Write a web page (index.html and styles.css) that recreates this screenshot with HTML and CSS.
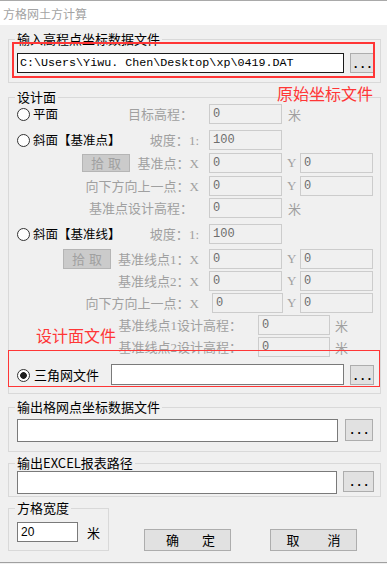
FILE: index.html
```html
<!DOCTYPE html>
<html lang="zh-CN">
<head>
  <meta charset="UTF-8" />
  <title>方格网土方计算</title>
  <link rel="stylesheet" href="styles.css">
</head>
<body>
  <div class="window">
    <div class="titlebar">方格网土方计算</div>

    <div class="client">
      <fieldset class="group g-in">
        <legend>输入高程点坐标数据文件</legend>
        <div class="file-row">
          <input class="path" value="C:\Users\Yiwu. Chen\Desktop\xp\0419.DAT">
          <button class="dots">...</button>
        </div>
      </fieldset>

      <fieldset class="group g-design">
        <legend>设计面</legend>

        <div class="row first">
          <div class="left">
            <span class="radio"></span><span class="opt">平面</span>
            <span class="lbl colon">目标高程：</span>
          </div>
          <input class="num" value="0" disabled>
          <span class="unit">米</span>
        </div>

        <div class="row gap6">
          <div class="left">
            <span class="radio"></span><span class="opt">斜面【基准点】</span>
            <span class="lbl">坡度：<span class="ax">1:</span></span>
          </div>
          <input class="num" value="100" disabled>
        </div>

        <div class="row gap3">
          <div class="left">
            <button class="pick" disabled><span>拾</span><span>取</span></button>
            <span class="lbl">基准点：<span class="ax">X</span></span>
          </div>
          <input class="num" value="0" disabled>
          <span class="axis">Y</span>
          <input class="num second" value="0" disabled>
        </div>

        <div class="row gap3">
          <div class="left">
            <span class="lbl">向下方向上一点：<span class="ax">X</span></span>
          </div>
          <input class="num" value="0" disabled>
          <span class="axis">Y</span>
          <input class="num second" value="0" disabled>
        </div>

        <div class="row">
          <div class="left">
            <span class="lbl colon">基准点设计高程：</span>
          </div>
          <input class="num" value="0" disabled>
          <span class="unit">米</span>
        </div>

        <div class="row gap6">
          <div class="left">
            <span class="radio"></span><span class="opt">斜面【基准线】</span>
            <span class="lbl">坡度：<span class="ax">1:</span></span>
          </div>
          <input class="num" value="100" disabled>
        </div>

        <div class="row gap5">
          <div class="left">
            <button class="pick tall" disabled><span>拾</span><span>取</span></button>
            <span class="lbl">基准线点<span class="ax">1</span>：<span class="ax">X</span></span>
          </div>
          <input class="num" value="0" disabled>
          <span class="axis">Y</span>
          <input class="num second" value="0" disabled>
        </div>

        <div class="row">
          <div class="left">
            <span class="lbl">基准线点<span class="ax">2</span>：<span class="ax">X</span></span>
          </div>
          <input class="num" value="0" disabled>
          <span class="axis">Y</span>
          <input class="num second" value="0" disabled>
        </div>

        <div class="row">
          <div class="left">
            <span class="lbl">向下方向上一点：<span class="ax">X</span></span>
          </div>
          <input class="num shift" value="0" disabled>
          <span class="axis narrow">Y</span>
          <input class="num second" value="0" disabled>
        </div>

        <div class="row">
          <div class="left wide">
            <span class="lbl colon">基准线点<span class="ax">1</span>设计高程：</span>
          </div>
          <input class="num w72" value="0" disabled>
          <span class="unit near">米</span>
        </div>

        <div class="row">
          <div class="left wide">
            <span class="lbl colon">基准线点<span class="ax">2</span>设计高程：</span>
          </div>
          <input class="num w72" value="0" disabled>
          <span class="unit near">米</span>
        </div>

        <div class="row tri gap7">
          <div class="left tri-left">
            <span class="radio on"></span><span class="opt big">三角网文件</span>
          </div>
          <input class="file tri-file" value="">
          <button class="dots">...</button>
        </div>
      </fieldset>

      <fieldset class="group g-out">
        <legend>输出格网点坐标数据文件</legend>
        <div class="file-row">
          <input class="file out-file" value="">
          <button class="dots out-btn">...</button>
        </div>
      </fieldset>

      <fieldset class="group g-excel">
        <legend>输出EXCEL报表路径</legend>
        <div class="file-row">
          <input class="file excel-file" value="">
          <button class="dots excel-btn">...</button>
        </div>
      </fieldset>

      <div class="bottom">
        <fieldset class="group g-size">
          <legend>方格宽度</legend>
          <div class="size-row">
            <input class="file size-in" value="20">
            <span class="size-unit">米</span>
          </div>
        </fieldset>
        <button class="cmd ok"><span>确</span><span>定</span></button>
        <button class="cmd cancel"><span>取</span><span>消</span></button>
      </div>
    </div>

    <div class="foot"></div>

    <div class="mark box1"></div>
    <div class="mark note note1">原始坐标文件</div>
    <div class="mark note note2">设计面文件</div>
    <div class="mark box2"></div>
  </div>
</body>
</html>
```

FILE: styles.css
```css
* {
  box-sizing: border-box;
}

body {
  margin: 0;
  background: #f0f0f0;
  font-family: "Noto Sans CJK SC", sans-serif;
  font-size: 13px;
  color: #000;
}

.window {
  position: relative;
  width: 387px;
  height: 564px;
  overflow: hidden;
}

.titlebar {
  height: 25px;
  border-top: 1px solid #a9a9a9;
  background: #fff;
  padding-left: 3px;
  font-size: 12px;
  line-height: 25px;
  color: #a3a3a3;
}

.client {
  padding: 0 6px 0 8px;
}

/* group boxes */
.group {
  margin: 0;
  padding: 0 6px 0 8px;
  border: 1px solid #d9d9d9;
  min-width: 0;
}

.group legend {
  margin-left: -2px;
  padding: 0 2px;
  font-size: 13px;
  line-height: 14px;
}

.g-in {
  margin-top: 7px;
  padding-top: 7px;
  padding-bottom: 9px;
}

.g-design {
  margin-top: 7px;
  padding-bottom: 8px;
}

.g-out {
  margin-top: 6px;
  padding-top: 5px;
  padding-bottom: 9px;
}

.g-excel {
  margin-top: 4px;
  padding-top: 1px;
  padding-bottom: 2px;
}

.file-row {
  display: flex;
  align-items: flex-start;
}

input {
  margin: 0;
  outline: none;
}

.path {
  width: 327px;
  height: 20px;
  border: 1px solid #1a1a1a;
  background: #fff;
  padding: 0 2px;
  font: 11.7px "Liberation Mono", monospace;
  color: #000;
}

.dots {
  flex: none;
  margin-left: 6px;
  width: 24px;
  height: 20px;
  padding: 0 0 0 3px;
  background: #e1e1e1;
  border: 1px solid #adadad;
  font: bold 12px "Liberation Sans", sans-serif;
  letter-spacing: 3.6px;
  line-height: 20px;
  color: #000;
}

/* design surface rows */
.row {
  display: flex;
  align-items: center;
  height: 20px;
  margin-top: 2px;
}

.row.first { margin-top: 0; }
.row.gap3 { margin-top: 3px; }
.row.gap5 { margin-top: 5px; }
.row.gap6 { margin-top: 6px; }
.row.gap7 { margin-top: 7px; }

.left {
  flex: none;
  width: 182px;
  display: flex;
  align-items: center;
  line-height: 16px;
}

.left.wide { width: 231px; }
.left.tri-left { width: 94px; }

.radio {
  flex: none;
  width: 13px;
  height: 13px;
  border: 1px solid #333;
  border-radius: 50%;
  background: #fff;
}

.radio.on {
  background: radial-gradient(circle, #1e1e1e 0 3px, #fff 3.7px);
}

.opt {
  margin-left: 3px;
  font-size: 12.5px;
  white-space: nowrap;
}

.opt.big {
  margin-left: 4px;
  font-size: 13px;
}

.lbl {
  margin-left: auto;
  color: #a0a0a0;
  white-space: nowrap;
}

.lbl.colon { padding-right: 6px; }

.ax {
  font-family: "Liberation Serif", serif;
  font-size: 13px;
}

.num {
  flex: none;
  margin-left: 10px;
  width: 73px;
  height: 20px;
  border: 1px solid #cccccc;
  background: #f0f0f0;
  padding: 0 3px;
  font: 12px "Liberation Mono", monospace;
  color: #6d6d6d;
}

.num.second { margin-left: 0; }
.num.shift { margin-left: 13px; width: 71px; }
.num.w72 { width: 72px; }

.axis {
  flex: none;
  width: 18px;
  padding-left: 5px;
  color: #a0a0a0;
  font-family: "Liberation Serif", serif;
  font-size: 13px;
}

.axis.narrow {
  width: 17px;
  padding-left: 4px;
}

.unit {
  margin-left: 6px;
  color: #a0a0a0;
}

.unit.near { margin-left: 5px; }

.pick {
  flex: none;
  display: flex;
  justify-content: center;
  align-items: center;
  gap: 4px;
  margin-left: 65px;
  width: 48px;
  height: 18px;
  padding: 0;
  background: #cbcbcb;
  border: 1px solid #b5b5b5;
  font: 13px "Noto Sans CJK SC", sans-serif;
  line-height: 16px;
  color: #a0a0a0;
}

.pick.tall {
  margin-left: 46px;
  height: 20px;
}

.row.tri {
  height: 21px;
  align-items: flex-start;
}

.row.tri .left { height: 21px; padding-top: 1px; }

.file {
  flex: none;
  border: 1px solid #7a7a7a;
  background: #fff;
  padding: 0 3px;
}

.tri-file {
  width: 233px;
  height: 21px;
}

.row.tri .dots { margin-top: 1px; }

.out-file {
  width: 321px;
  height: 23px;
}

.dots.out-btn {
  margin-left: 7px;
  width: 28px;
  height: 22px;
  padding-left: 4px;
}

.excel-file {
  width: 320px;
  height: 23px;
}

.dots.excel-btn {
  width: 31px;
  height: 21px;
  padding-left: 5px;
}

/* bottom */
.bottom {
  display: flex;
  align-items: flex-end;
  margin-top: 4px;
}

.g-size {
  flex: none;
  width: 101px;
  padding-top: 7px;
  padding-bottom: 8px;
}

.size-row {
  display: flex;
  align-items: center;
}

.size-in {
  width: 61px;
  height: 20px;
  font: 12px "Liberation Sans", sans-serif;
  color: #000;
}

.size-unit {
  margin-left: 9px;
  font-size: 13px;
}

.cmd {
  flex: none;
  display: flex;
  justify-content: center;
  gap: 23px;
  width: 87px;
  height: 22px;
  padding: 0;
  background: #e1e1e1;
  border: 1px solid #adadad;
  font: 13px "Noto Sans CJK SC", sans-serif;
  line-height: 20px;
  color: #000;
}

.cmd.ok {
  margin-left: 35px;
  padding-left: 6px;
}

.cmd.cancel {
  margin-left: 39px;
  gap: 28px;
}

.foot {
  position: absolute;
  left: 0;
  right: 0;
  top: 562px;
  height: 2px;
  border-top: 1px solid #a0a0a0;
}

/* red annotations drawn over the dialog */
.mark {
  position: absolute;
}

.box1 {
  left: 12px;
  top: 42px;
  width: 363px;
  height: 36px;
  border: 2px solid #ff3636;
}

.box2 {
  left: 8px;
  top: 350px;
  width: 372px;
  height: 37px;
  border: 1px solid #ff3636;
}

.note {
  font-size: 16px;
  line-height: 20px;
  color: #ff3636;
  white-space: nowrap;
}

.note1 {
  left: 277px;
  top: 83px;
}

.note2 {
  left: 36px;
  top: 325px;
}
```
